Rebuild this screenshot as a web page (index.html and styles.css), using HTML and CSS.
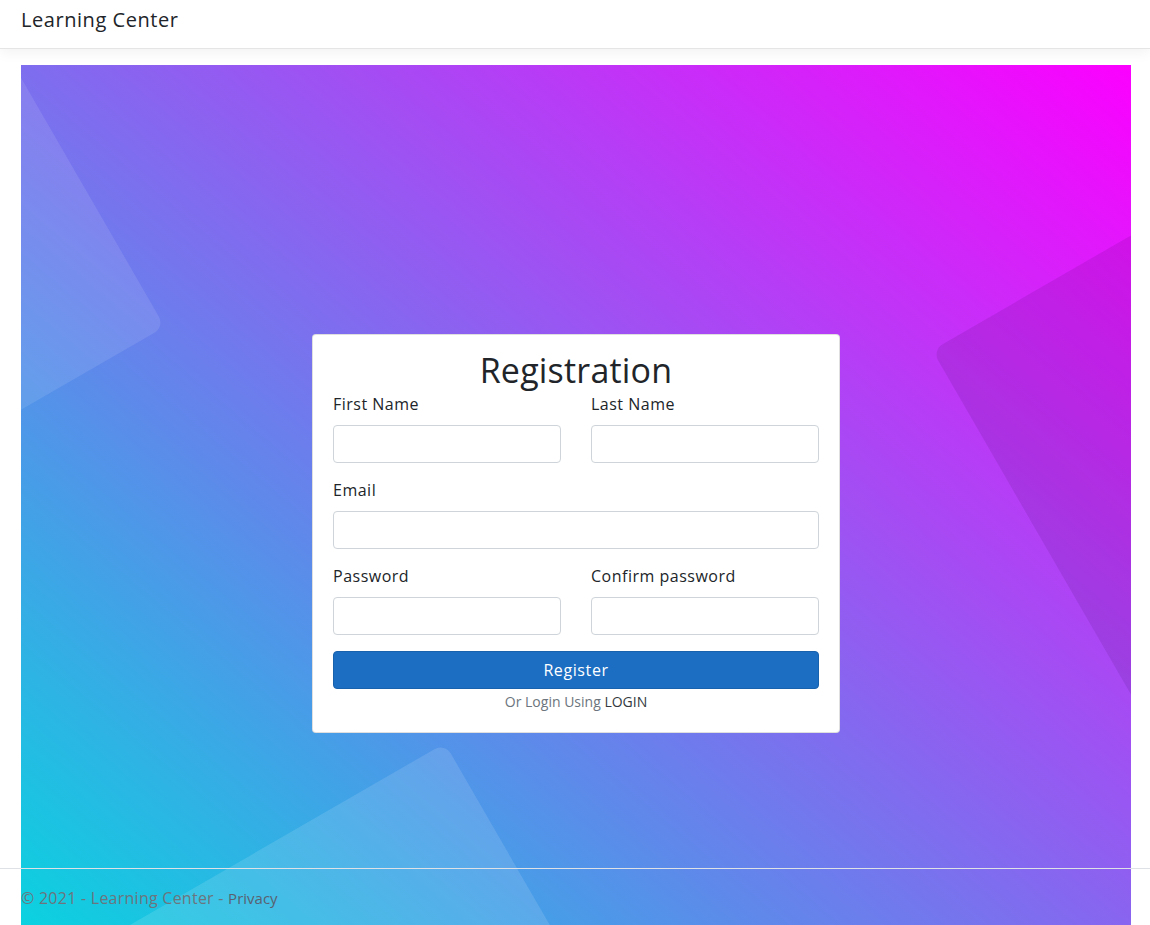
FILE: index.html
```html
<!DOCTYPE html>
<html lang="en">
<head>
<meta charset="utf-8">
<title>Registration - Learning Center</title>
<link rel="stylesheet" href="styles.css">
</head>
<body>
<header class="topbar">
  <a class="brand" href="#">Learning Center</a>
</header>
<main class="hero">
  <div class="shape shape-left"></div>
  <div class="shape shape-right"></div>
  <div class="shape shape-bottom"></div>
  <form class="card">
    <h2 class="card-title">Registration</h2>
    <div class="grid">
      <div class="field">
        <label>First Name</label>
        <input type="text">
      </div>
      <div class="field">
        <label>Last Name</label>
        <input type="text">
      </div>
      <div class="field wide">
        <label>Email</label>
        <input type="email">
      </div>
      <div class="field">
        <label>Password</label>
        <input type="password">
      </div>
      <div class="field">
        <label>Confirm password</label>
        <input type="password">
      </div>
    </div>
    <button type="button" class="btn">Register</button>
    <p class="alt">Or Login Using <a href="#">LOGIN</a></p>
  </form>
</main>
<footer class="footer">
  <div class="footer-inner">&copy; 2021 - Learning Center - <a href="#">Privacy</a></div>
</footer>
</body>
</html>
```
FILE: styles.css
```css
* { box-sizing: border-box; }
html { position: relative; }
body {
  margin: 0;
  font-family: "Open Sans", "Liberation Sans", sans-serif;
  color: #212529;
  background: #fff;
  overflow: hidden;
  height: 925px;
}
.topbar {
  height: 49px;
  border-bottom: 1px solid #e5e5e5;
  box-shadow: 0 4px 12px rgba(0,0,0,.05);
  padding: 6px 21px 0;
  display: flex;
  align-items: flex-start;
  margin-bottom: 16px;
}
.brand {
  font-size: 20px;
  line-height: 28px;
  color: #212529;
  text-decoration: none;
  letter-spacing: 0.55px;
}
.hero {
  position: relative;
  overflow: hidden;
  margin: 0 19px 0 21px;
  height: 937px;
  background: linear-gradient(to top right, #00dbde 0%, #fc00ff 100%);
  display: flex;
  align-items: center;
  justify-content: center;
}
.shape {
  position: absolute;
  width: 600px;
  height: 600px;
  border-radius: 12px;
  transform: rotate(60deg);
}
.shape-left {
  left: -566px;
  top: -148px;
  background: rgba(255,255,255,.10);
}
.shape-right {
  left: 1021px;
  top: 95px;
  background: rgba(50,0,70,.11);
}
.shape-bottom {
  left: 14px;
  top: 788px;
  background: rgba(255,255,255,.12);
}
.card {
  position: relative;
  width: 528px;
  background: #fff;
  border: 1px solid rgba(0,0,0,.125);
  border-radius: 4px;
  padding: 20px;
}
.card-title {
  margin: 0 0 9px;
  text-align: center;
  font-weight: 400;
  font-size: 34px;
  line-height: 30px;
  letter-spacing: 0.2px;
  color: #212529;
}
.grid {
  display: grid;
  grid-template-columns: 1fr 1fr;
  column-gap: 30px;
  row-gap: 17px;
}
.field.wide { grid-column: 1 / -1; }
.field label {
  display: block;
  font-size: 16px;
  line-height: 20px;
  margin-bottom: 11px;
  letter-spacing: 0.5px;
}
.field input {
  display: block;
  width: 100%;
  height: 38px;
  border: 1px solid #ced4da;
  border-radius: 4px;
  background: #fff;
  font: inherit;
}
.btn {
  display: block;
  width: 100%;
  height: 38px;
  margin-top: 16px;
  border: 1px solid #1861ac;
  border-radius: 4px;
  background: #1b6ec2;
  color: #fff;
  font-family: inherit;
  font-size: 16px;
  letter-spacing: 0.6px;
}
.alt {
  margin: 2px 0 0;
  text-align: center;
  font-size: 14px;
  line-height: 21px;
  color: #6c757d;
}
.alt a { color: #343a40; text-decoration: none; }
.footer {
  position: absolute;
  left: 0;
  right: 0;
  top: 868px;
  border-top: 1px solid #dee2e6;
  line-height: 58px;
  white-space: nowrap;
}
.footer-inner {
  padding-left: 21px;
  font-size: 16px;
  letter-spacing: 0.25px;
  color: #6c757d;
}
.footer a {
  font-size: 15px;
  letter-spacing: 0;
  color: #5a6270;
  text-decoration: none;
}
```
